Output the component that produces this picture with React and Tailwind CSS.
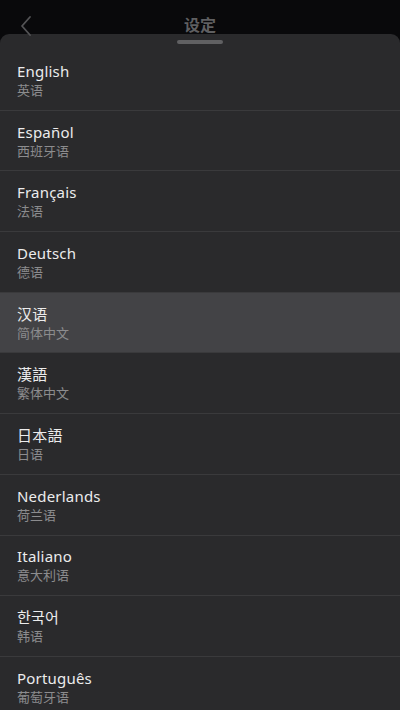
import React from "react";

const langs = [
  ["English", "英语"],
  ["Español", "西班牙语"],
  ["Français", "法语"],
  ["Deutsch", "德语"],
  ["汉语", "简体中文", true],
  ["漢語", "繁体中文"],
  ["日本語", "日语"],
  ["Nederlands", "荷兰语"],
  ["Italiano", "意大利语"],
  ["한국어", "韩语"],
  ["Português", "葡萄牙语"],
];

export default function App() {
  return (
    <div
      className="w-[400px] h-[710px] overflow-hidden bg-[#09090b] flex flex-col"
      style={{ fontFamily: '"Noto Sans", "Noto Sans CJK SC", sans-serif' }}
    >
      <div className="h-[34px] shrink-0 flex items-center relative px-[18px]">
        <svg width="14" height="22" viewBox="0 0 14 22" className="absolute left-[19px] top-[15px]">
          <path d="M11 2 L3 11 L11 20" fill="none" stroke="#545456" strokeWidth="1.8" strokeLinecap="round" strokeLinejoin="round" />
        </svg>
        <div className="w-full text-center text-[16px] font-bold text-[#5f5f61] pt-[16px] leading-none">设定</div>
      </div>
      <div className="flex-1 bg-[#2a2a2c] rounded-t-[9px] flex flex-col">
        <div className="h-[16px] shrink-0 flex justify-center pt-[6px]">
          <div className="w-[46px] h-[4px] rounded-full bg-[#606062]" />
        </div>
        {langs.map(([t, s, hl], i) => (
          <div
            key={i}
            className={`shrink-0 h-[60.7px] border-b border-[#3a3a3c] pl-[17px] flex flex-col justify-center ${hl ? "bg-[#434346]" : ""}`}
          >
            <div className="text-[15px] leading-[20px] text-[#ececec] tracking-[0.2px]">{t}</div>
            <div className="text-[13px] leading-[17px] text-[#8c8c8e] mt-[1px]">{s}</div>
          </div>
        ))}
      </div>
    </div>
  );
}
